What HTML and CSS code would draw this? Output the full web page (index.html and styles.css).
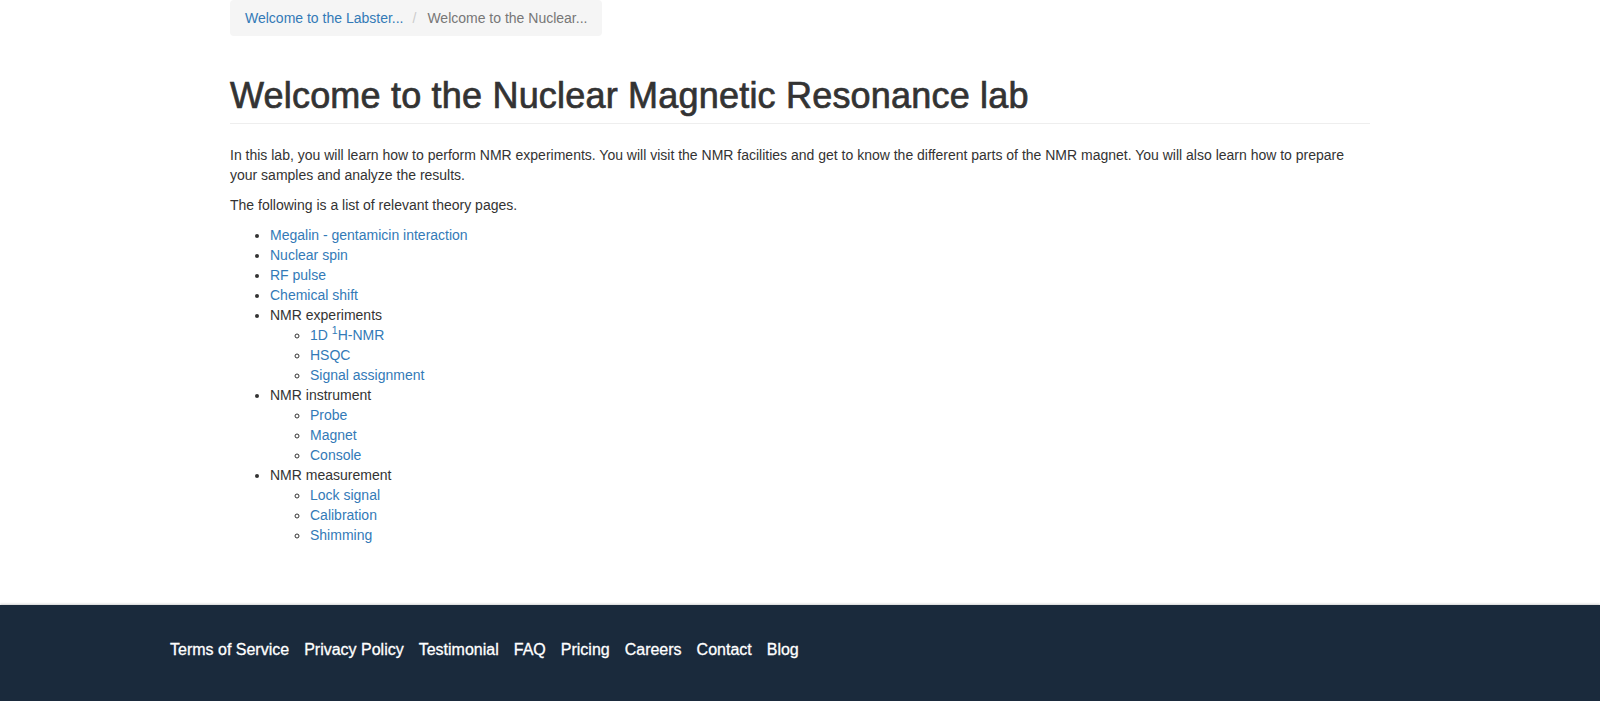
FILE: index.html
```html
<!DOCTYPE html>
<html lang="en">
<head>
<meta charset="utf-8">
<title>Welcome to the Nuclear Magnetic Resonance lab</title>
<link rel="stylesheet" href="styles.css">
</head>
<body>
<main class="container main">
  <ol class="breadcrumb">
    <li><a href="#">Welcome to the Labster...</a></li>
    <li class="active">Welcome to the Nuclear...</li>
  </ol>
  <div class="page-header">
    <h1>Welcome to the Nuclear Magnetic Resonance lab</h1>
  </div>
  <p>In this lab, you will learn how to perform NMR experiments. You will visit the NMR facilities and get to know the different parts of the NMR magnet. You will also learn how to prepare your samples and analyze the results.</p>
  <p>The following is a list of relevant theory pages.</p>
  <ul class="list">
    <li><a href="#">Megalin - gentamicin interaction</a></li>
    <li><a href="#">Nuclear spin</a></li>
    <li><a href="#">RF pulse</a></li>
    <li><a href="#">Chemical shift</a></li>
    <li>NMR experiments
      <ul class="sublist">
        <li><a href="#">1D <sup>1</sup>H-NMR</a></li>
        <li><a href="#">HSQC</a></li>
        <li><a href="#">Signal assignment</a></li>
      </ul>
    </li>
    <li>NMR instrument
      <ul class="sublist">
        <li><a href="#">Probe</a></li>
        <li><a href="#">Magnet</a></li>
        <li><a href="#">Console</a></li>
      </ul>
    </li>
    <li>NMR measurement
      <ul class="sublist">
        <li><a href="#">Lock signal</a></li>
        <li><a href="#">Calibration</a></li>
        <li><a href="#">Shimming</a></li>
      </ul>
    </li>
  </ul>
</main>
<footer class="footer">
  <nav class="footer-links">
    <a href="#">Terms of Service</a>
    <a href="#">Privacy Policy</a>
    <a href="#">Testimonial</a>
    <a href="#">FAQ</a>
    <a href="#">Pricing</a>
    <a href="#">Careers</a>
    <a href="#">Contact</a>
    <a href="#">Blog</a>
  </nav>
</footer>
</body>
</html>
```
FILE: styles.css
```css
* { box-sizing: border-box; }
html, body { margin: 0; padding: 0; }
body {
  font-family: "Liberation Sans", Arial, sans-serif;
  font-size: 14px;
  line-height: 20px;
  color: #333;
  background: #fff;
}
a { color: #337ab7; text-decoration: none; }

.container {
  width: 1170px;
  margin: 0 auto;
  padding: 0 15px;
}
.main {
  padding-bottom: 50px;
}

.breadcrumb {
  display: inline-flex;
  list-style: none;
  margin: 0 0 20px;
  padding: 8px 15px;
  background: #f5f5f5;
  border-radius: 4px;
}
.breadcrumb li + li::before {
  content: "/";
  padding: 0 5px;
  color: #ccc;
  display: inline-block;
  margin: 0 6px 0 4px;
}
.breadcrumb .active { color: #777; }

.page-header {
  margin: 20px 0 21px;
  padding-bottom: 7px;
  border-bottom: 1px solid #eee;
}
.page-header h1 {
  margin: 0;
  font-size: 36px;
  font-weight: 500;
  line-height: 39.6px;
  color: #333;
  letter-spacing: 0.2px;
  -webkit-text-stroke: 0.7px #333;
}

p { margin: 0 0 10px; }

.list {
  margin: 0 0 10px;
  padding-left: 40px;
}
.sublist {
  margin: 0;
  padding-left: 40px;
  list-style-type: circle;
}
sup {
  font-size: 75%;
  line-height: 0;
  position: relative;
  vertical-align: baseline;
  top: -0.5em;
}

.footer {
  background: #1a2a3c;
  box-shadow: 0 -1px 2px rgba(0, 0, 0, 0.18);
  height: 110px;
  padding-top: 35px;
}
.footer-links {
  display: flex;
  gap: 15px;
  padding-left: 170px;
}
.footer-links a {
  color: #fff;
  font-size: 16px;
  line-height: 20px;
  -webkit-text-stroke: 0.3px #fff;
}
```
